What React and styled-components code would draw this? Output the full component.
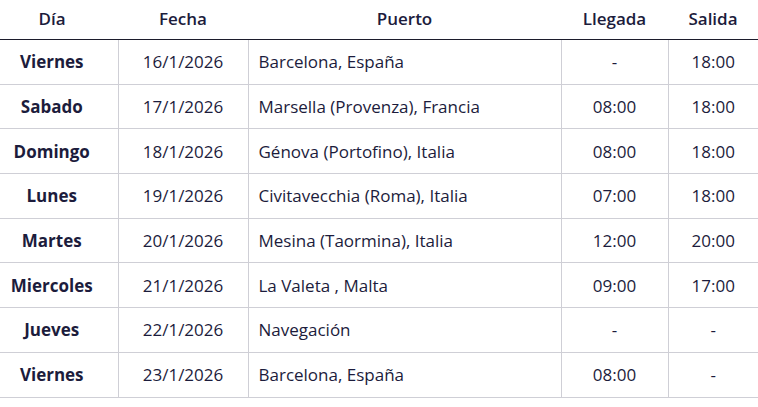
import React from 'react';
import styled, { createGlobalStyle } from 'styled-components';

const GlobalStyle = createGlobalStyle`
  body {
    margin: 0;
    background: #ffffff;
    font-family: "Open Sans", "Noto Sans", sans-serif;
  }
`;

const itinerary = [
  { day: 'Viernes', date: '16/1/2026', port: 'Barcelona, España', arrival: '-', departure: '18:00' },
  { day: 'Sabado', date: '17/1/2026', port: 'Marsella (Provenza), Francia', arrival: '08:00', departure: '18:00' },
  { day: 'Domingo', date: '18/1/2026', port: 'Génova (Portofino), Italia', arrival: '08:00', departure: '18:00' },
  { day: 'Lunes', date: '19/1/2026', port: 'Civitavecchia (Roma), Italia', arrival: '07:00', departure: '18:00' },
  { day: 'Martes', date: '20/1/2026', port: 'Mesina (Taormina), Italia', arrival: '12:00', departure: '20:00' },
  { day: 'Miercoles', date: '21/1/2026', port: 'La Valeta , Malta', arrival: '09:00', departure: '17:00' },
  { day: 'Jueves', date: '22/1/2026', port: 'Navegación', arrival: '-', departure: '-' },
  { day: 'Viernes', date: '23/1/2026', port: 'Barcelona, España', arrival: '08:00', departure: '-' },
];

function App() {
  return (
    <>
      <GlobalStyle />
      <Table>
        <colgroup>
          <col style={{ width: 118 }} />
          <col style={{ width: 130 }} />
          <col style={{ width: 313 }} />
          <col style={{ width: 107 }} />
          <col />
        </colgroup>
        <thead>
          <tr>
            <Th>Día</Th>
            <Th>Fecha</Th>
            <Th>Puerto</Th>
            <Th>Llegada</Th>
            <Th>Salida</Th>
          </tr>
        </thead>
        <tbody>
          {itinerary.map((row, i) => (
            <Row key={i}>
              <Td $bold>{row.day}</Td>
              <Td>{row.date}</Td>
              <Td $left>{row.port}</Td>
              <Td>{row.arrival}</Td>
              <Td>{row.departure}</Td>
            </Row>
          ))}
        </tbody>
      </Table>
    </>
  );
}

export default App;

const Table = styled.table`
  width: 758px;
  border-collapse: collapse;
  table-layout: fixed;
  color: #1c1c3c;
  font-size: 17px;
`;

const Th = styled.th`
  height: 36px;
  padding: 0 10px 3px;
  font-weight: 600;
  text-align: center;
  border-bottom: 1px solid #1c1c2c;

  &:first-child {
    padding: 0 14px 3px 0;
  }
`;

const Row = styled.tr`
  height: 44.7px;
`;

const Td = styled.td`
  padding: 0 10px;
  text-align: ${p => (p.$left ? 'left' : 'center')};
  font-weight: ${p => (p.$bold ? 700 : 400)};
  border-bottom: 1px solid #cfcfd6;
  border-left: 1px solid #cfcfd6;

  &:first-child {
    border-left: none;
    padding: 0 14px 0 0;
  }
`;
